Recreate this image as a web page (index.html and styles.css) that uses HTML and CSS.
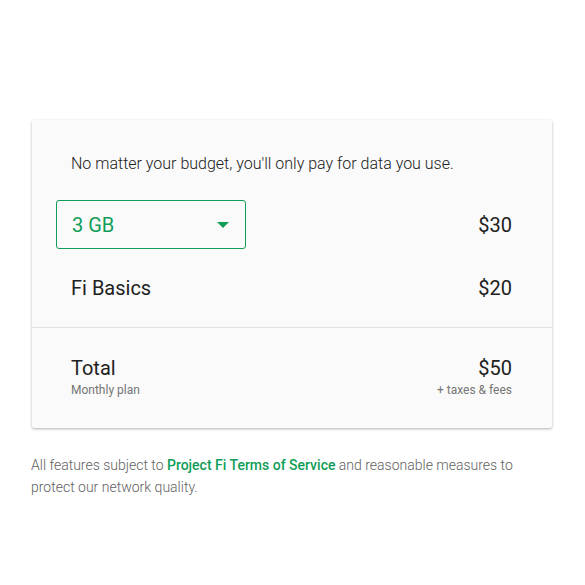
FILE: index.html
```html
<!DOCTYPE html>
<html lang="en">
<head>
  <meta charset="UTF-8">
  <title>Plan pricing</title>
  <meta name="viewport" content="width=device-width, initial-scale=1.0">
  <link rel="stylesheet" href="styles.css">
</head>
<body>
  <div class="container">
    <div class="card">
      <p class="intro">No matter your budget, you'll only pay for data you use.</p>

      <div class="row row-select">
        <div class="select">
          <span>3 GB</span>
          <svg class="arrow" width="12" height="6" viewBox="0 0 12 6"><path d="M0 0h12L6 6z" fill="#0f9d58"/></svg>
        </div>
        <div class="price">$30</div>
      </div>

      <div class="row row-basics">
        <div class="name">Fi Basics</div>
        <div class="price">$20</div>
      </div>

      <div class="total">
        <div class="total-col">
          <div class="name">Total</div>
          <div class="sub">Monthly plan</div>
        </div>
        <div class="total-col right">
          <div class="price">$50</div>
          <div class="sub">+ taxes &amp; fees</div>
        </div>
      </div>
    </div>

    <p class="note">All features subject to <a href="#">Project Fi Terms of Service</a> and reasonable measures to protect our network quality.</p>
  </div>
</body>
</html>
```

FILE: styles.css
```css
body {
  font-family: Roboto, 'Liberation Sans', sans-serif;
  background: #fff;
  color: #212121;
  margin: 0;
}
.container {
  width: 520px;
  margin: 0 0 0 32px;
  padding-top: 120px;
}
.card {
  background: #fafafa;
  border-radius: 2px;
  box-shadow: 0 1px 3px rgba(0, 0, 0, 0.3);
}
.intro {
  margin: 0;
  padding: 32px 40px 0 39px;
  font-size: 16px;
  font-weight: 300;
  line-height: 24px;
  color: #212121;
}
.row {
  display: flex;
  align-items: center;
  justify-content: space-between;
  padding: 0 40px 0 39px;
}
.row-select {
  margin-top: 24px;
  padding-left: 24px;
}
.select {
  width: 190px;
  height: 49px;
  box-sizing: border-box;
  border: 1.5px solid #0f9d58;
  border-radius: 3px;
  display: flex;
  align-items: center;
  justify-content: space-between;
  padding: 0 16px 0 15px;
  color: #0f9d58;
  font-size: 20px;
}
.row-basics {
  height: 78px;
  border-bottom: 1px solid #e0e0e0;
}
.name,
.price {
  font-size: 20px;
  line-height: 24px;
  color: #212121;
}
.total {
  display: flex;
  justify-content: space-between;
  padding: 28px 40px 28px 39px;
}
.total-col.right {
  text-align: right;
}
.sub {
  font-size: 12px;
  line-height: 20px;
  color: #757575;
}
.note {
  margin: 26px 0 0 -1px;
  font-size: 14px;
  font-weight: 300;
  line-height: 22px;
  color: #616161;
}
.note a {
  color: #0f9d58;
  font-weight: 500;
  text-decoration: none;
}
```
